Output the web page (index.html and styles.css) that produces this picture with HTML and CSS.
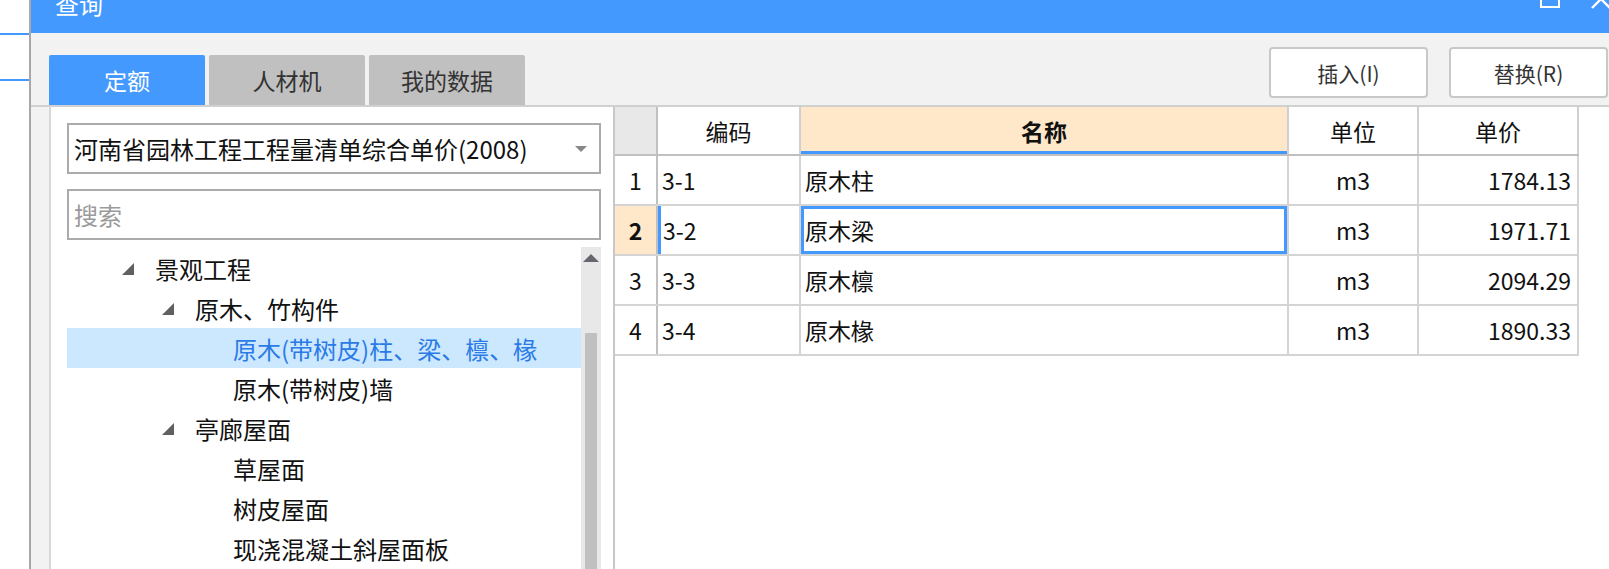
FILE: index.html
```html
<!DOCTYPE html>
<html lang="zh-CN">
  <head>
    <meta charset="UTF-8" />
    <meta name="viewport" content="width=device-width, initial-scale=1.0" />
    <title>查询</title>
    <link rel="stylesheet" href="styles.css">
  </head>
  <body>
    <div class="desk">
      <div class="desk-line first"></div>
      <div class="desk-line"></div>
    </div>
    <div class="dialog">
      <div class="titlebar">
        <span class="title">查询</span>
        <div class="win-buttons">
          <svg class="win-icon" width="20" height="20" viewBox="0 0 20 20">
            <rect x="1" y="1" width="18" height="18" fill="none" stroke="#fff" stroke-width="2" />
          </svg>
          <svg class="win-icon close" width="22" height="22" viewBox="0 0 22 22">
            <path d="M2 2 L20 20 M20 2 L2 20" stroke="#fff" stroke-width="2.4" fill="none" />
          </svg>
        </div>
      </div>

      <div class="toolbar">
        <div class="tabs">
          <div class="tab active">定额</div>
          <div class="tab">人材机</div>
          <div class="tab">我的数据</div>
        </div>
        <div class="actions">
          <button type="button" class="btn">插入(I)</button>
          <button type="button" class="btn">替换(R)</button>
        </div>
      </div>

      <div class="panels">
        <div class="left-panel">
          <div class="combo">
            <span>河南省园林工程工程量清单综合单价(2008)</span>
            <span class="combo-arrow"></span>
          </div>
          <input class="search" type="text" placeholder="搜索" />
          <div class="tree-wrap">
            <div class="tree">
              <div class="node lv0">
                <span class="twisty"><svg width="12" height="12" viewBox="0 0 12 12"><polygon points="12,0 12,12 0,12" fill="#606060" /></svg></span>
                景观工程
              </div>
              <div class="node lv1">
                <span class="twisty"><svg width="12" height="12" viewBox="0 0 12 12"><polygon points="12,0 12,12 0,12" fill="#606060" /></svg></span>
                原木、竹构件
              </div>
              <div class="node lv2 selected">原木(带树皮)柱、梁、檩、椽</div>
              <div class="node lv2">原木(带树皮)墙</div>
              <div class="node lv1">
                <span class="twisty"><svg width="12" height="12" viewBox="0 0 12 12"><polygon points="12,0 12,12 0,12" fill="#606060" /></svg></span>
                亭廊屋面
              </div>
              <div class="node lv2">草屋面</div>
              <div class="node lv2">树皮屋面</div>
              <div class="node lv2">现浇混凝土斜屋面板</div>
            </div>
            <div class="scrollbar">
              <span class="scroll-up"></span>
              <div class="thumb"></div>
            </div>
          </div>
        </div>

        <div class="right-panel">
          <table class="grid">
            <colgroup>
              <col style="width: 42px" />
              <col style="width: 143px" />
              <col style="width: 488px" />
              <col style="width: 130px" />
              <col style="width: 160px" />
            </colgroup>
            <thead>
              <tr>
                <th class="rownum"></th>
                <th>编码</th>
                <th class="sorted">名称</th>
                <th>单位</th>
                <th>单价</th>
              </tr>
            </thead>
            <tbody>
              <tr>
                <td class="rownum">1</td>
                <td>3-1</td>
                <td>原木柱</td>
                <td class="center">m3</td>
                <td class="num">1784.13</td>
              </tr>
              <tr class="current">
                <td class="rownum">2</td>
                <td class="mark">3-2</td>
                <td class="focus">原木梁</td>
                <td class="center">m3</td>
                <td class="num">1971.71</td>
              </tr>
              <tr>
                <td class="rownum">3</td>
                <td>3-3</td>
                <td>原木檩</td>
                <td class="center">m3</td>
                <td class="num">2094.29</td>
              </tr>
              <tr>
                <td class="rownum">4</td>
                <td>3-4</td>
                <td>原木椽</td>
                <td class="center">m3</td>
                <td class="num">1890.33</td>
              </tr>
            </tbody>
          </table>
        </div>
      </div>
    </div>
  </body>
</html>
```

FILE: styles.css
```css
body {
  margin: 0;
  width: 1609px;
  height: 569px;
  overflow: hidden;
  display: flex;
  background-color: #ffffff;
  font-family: "Noto Sans CJK SC", "Noto Sans", sans-serif;
  color: #222;
}
.desk {
  width: 29px;
  display: flex;
  flex-direction: column;
}
.desk-line {
  height: 2px;
  margin-top: 44px;
  background-color: #4499ff;
}
.desk-line.first {
  margin-top: 33px;
}
.dialog {
  flex: 1;
  display: flex;
  flex-direction: column;
  border-left: 2px solid #a8a8a8;
  background-color: #f2f2f2;
}
.titlebar {
  height: 33px;
  flex-shrink: 0;
  display: flex;
  justify-content: space-between;
  align-items: flex-start;
  padding-left: 24px;
  background-color: #4499ff;
  overflow: hidden;
}
.title {
  color: #fff;
  font-size: 24px;
  line-height: 24px;
  margin-top: -8px;
}
.win-buttons {
  display: flex;
  gap: 30px;
  margin-right: -3px;
}
.win-icon {
  margin-top: -12px;
}
.toolbar {
  height: 72px;
  flex-shrink: 0;
  display: flex;
  justify-content: space-between;
  padding-left: 18px;
}
.tabs {
  display: flex;
  gap: 4px;
  align-self: flex-end;
}
.tab {
  width: 156px;
  height: 50px;
  display: flex;
  align-items: center;
  justify-content: center;
  background-color: #c0c0c0;
  border-radius: 2px 2px 0 0;
  font-size: 23px;
  color: #333;
}
.tab.active {
  background-color: #4499ff;
  color: #fff;
}
.actions {
  display: flex;
  gap: 21px;
  margin-top: 14px;
  margin-right: 1px;
}
.btn {
  width: 159px;
  height: 51px;
  border: 2px solid #c8c8c8;
  border-radius: 4px;
  background-color: #fff;
  font-family: "Noto Sans CJK SC", "Noto Sans", sans-serif;
  font-size: 21px;
  color: #333;
  padding: 0;
}
.panels {
  flex: 1;
  display: flex;
  border-top: 2px solid #d0d0d0;
  min-height: 0;
}
.left-panel {
  width: 534px;
  flex-shrink: 0;
  margin-left: 18px;
  padding: 16px 12px 0 16px;
  border-left: 2px solid #d8d8d8;
  background-color: #fff;
  display: flex;
  flex-direction: column;
}
.combo {
  height: 47px;
  border: 2px solid #ababab;
  display: flex;
  align-items: center;
  justify-content: space-between;
  padding: 0 12px 0 5px;
  font-size: 24px;
  color: #111;
}
.combo-arrow {
  width: 0;
  height: 0;
  border-left: 6px solid transparent;
  border-right: 6px solid transparent;
  border-top: 6px solid #888;
}
.search {
  height: 47px;
  margin: 15px 0 0 0;
  border: 2px solid #ababab;
  padding: 0 5px;
  font-family: "Noto Sans CJK SC", "Noto Sans", sans-serif;
  font-size: 24px;
  color: #222;
  outline: none;
  box-sizing: content-box;
  width: calc(100% - 14px);
}
.search::placeholder {
  color: #9a9a9a;
}
.tree-wrap {
  flex: 1;
  display: flex;
  margin-top: 7px;
  min-height: 0;
}
.tree {
  flex: 1;
  padding-top: 1px;
}
.node {
  height: 40px;
  display: flex;
  align-items: center;
  font-size: 24px;
  color: #111;
  white-space: nowrap;
}
.node.lv0 {
  padding-left: 55px;
}
.node.lv1 {
  padding-left: 95px;
}
.node.lv2 {
  padding-left: 166px;
}
.node.selected {
  background-color: #cce8ff;
  color: #2b7be6;
}
.twisty {
  width: 33px;
  display: flex;
  align-items: center;
  margin-top: 2px;
}
.scrollbar {
  width: 20px;
  background-color: #e8e8e8;
  display: flex;
  flex-direction: column;
  align-items: center;
}
.scroll-up {
  width: 0;
  height: 0;
  margin-top: 7px;
  border-left: 8px solid transparent;
  border-right: 8px solid transparent;
  border-bottom: 8px solid #666670;
}
.thumb {
  width: 12px;
  flex: 1;
  margin-top: 71px;
  background-color: #c0c0c0;
  border-radius: 1px 1px 0 0;
}
.right-panel {
  flex: 1;
  border-left: 2px solid #c8c8c8;
  background-color: #fff;
}
.grid {
  border-collapse: collapse;
  table-layout: fixed;
  width: 963px;
  font-size: 23px;
  color: #111;
}
.grid th {
  height: 47px;
  font-weight: normal;
  text-align: center;
  border-right: 2px solid #d0d0d0;
  border-bottom: 2px solid #c0c0c0;
  padding: 0;
}
.grid th.sorted {
  background-color: #ffe8c9;
  font-weight: bold;
  box-shadow: inset 0 -3px 0 #4499ff;
}
.grid th.rownum {
  background-color: #e8e8e8;
  border-right-color: #c0c0c0;
}
.grid td {
  height: 48px;
  padding: 0 4px;
  border-right: 2px solid #d4d4d4;
  border-bottom: 2px solid #d4d4d4;
  white-space: nowrap;
}
.grid td.rownum {
  text-align: center;
  padding: 0;
  border-right-color: #c0c0c0;
}
.grid tr.current td.rownum {
  background-color: #ffe8c9;
  font-weight: bold;
}
.grid td.mark {
  box-shadow: inset 3px 0 0 #4499ff;
  padding-left: 5px;
}
.grid td.focus {
  box-shadow: inset 0 0 0 3px #4499ff;
}
.grid td.center {
  text-align: center;
}
.grid td.num {
  text-align: right;
  padding-right: 6px;
}
```
